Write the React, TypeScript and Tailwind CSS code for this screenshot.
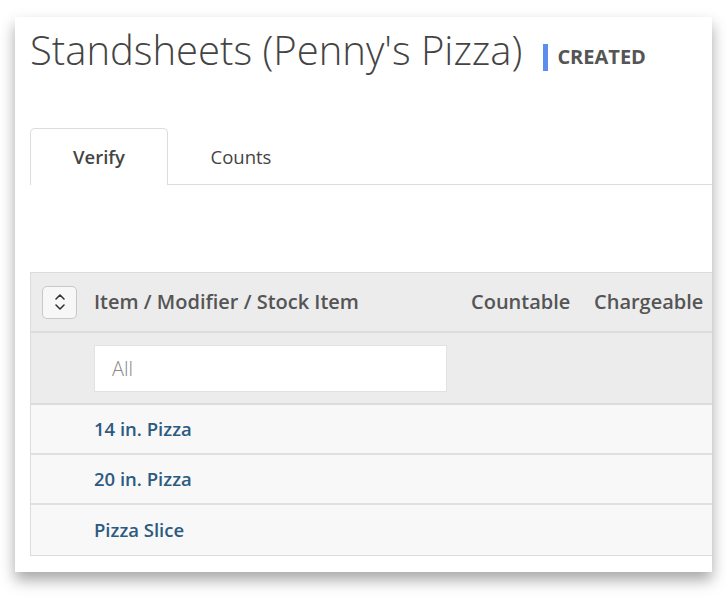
import React from "react";

const rows = ["14 in. Pizza", "20 in. Pizza", "Pizza Slice"];

const SortButton = () => (
  <button className="flex h-[33px] w-[35px] items-center justify-center rounded-[5px] border border-[#c8c8c8] bg-[#f7f7f7]">
    <svg width="14" height="22" viewBox="0 0 14 22" fill="none" stroke="#333" strokeWidth="1.6" strokeLinecap="round" strokeLinejoin="round">
      <path d="M3 8 L7 4 L11 8" />
      <path d="M3 14 L7 18 L11 14" />
    </svg>
  </button>
);

const App = () => {
  return (
    <div className="h-[598px] w-[726px] overflow-hidden bg-white font-['Open_Sans',sans-serif]">
      <div className="ml-[15px] mt-[17px] flex h-[555px] w-[697px] flex-col overflow-hidden bg-white pl-[15px] shadow-[0_8px_14px_rgba(0,0,0,0.35)]">
        <div className="flex items-center pt-[5px]">
          <h1 className="text-[40px] font-light leading-[56px] text-[#444]">Standsheets (Penny's Pizza)</h1>
          <div className="ml-[21px] mt-[14px] flex items-center">
            <span className="h-[27px] w-[5px] bg-[#5b8def]" />
            <span className="ml-[9px] text-[20px] font-bold text-[#555]">CREATED</span>
          </div>
        </div>

        <div className="mt-[50px] flex h-[57px] items-end border-b border-[#dcdcdc]">
          <div className="-mb-px flex h-[57px] w-[138px] items-center justify-center rounded-t-[5px] border border-b-0 border-[#dcdcdc] bg-white text-[18.5px] font-semibold text-[#444]">
            Verify
          </div>
          <div className="-mb-px ml-[4px] flex h-[57px] w-[138px] items-center justify-center text-[18.5px] text-[#444]">Counts</div>
        </div>

        <div className="mt-[87px] w-[720px] border border-[#dcdcdc]">
          <div className="flex h-[60px] items-center border-b-[2px] border-[#dcdcdc] bg-[#ececec] text-[20px] font-semibold text-[#555]">
            <div className="flex w-[63px] justify-start pl-[11px]">
              <SortButton />
            </div>
            <div className="w-[377px]">Item / Modifier / Stock Item</div>
            <div className="w-[123px]">Countable</div>
            <div>Chargeable</div>
          </div>
          <div className="flex h-[72px] items-center border-b-[2px] border-[#dcdcdc] bg-[#ececec] pl-[63px]">
            <input
              placeholder="All"
              className="h-[47px] w-[353px] border border-[#e2e2e2] bg-white px-[17px] text-[20px] font-light text-[#444] placeholder:text-[#8a8a8a] outline-none"
            />
          </div>
          {rows.map((r, i) => (
            <div
              key={r}
              className={`flex h-[50px] items-center bg-[#f8f8f8] pl-[63px] text-[18.5px] font-semibold text-[#2d5a80] ${i < rows.length - 1 ? "border-b-[2px] border-[#e0e0e0]" : ""}`}
            >
              {r}
            </div>
          ))}
        </div>
      </div>
    </div>
  );
};

export default App;
